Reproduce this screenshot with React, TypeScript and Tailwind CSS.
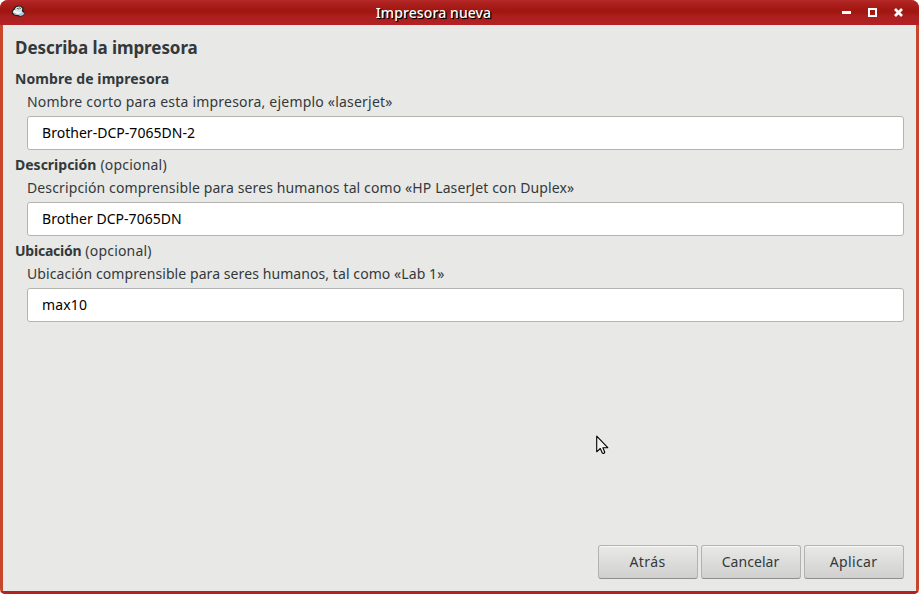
import React from "react";

function Field({
  label,
  optional,
  labelClass,
  hint,
  hintClass,
  value,
  valueClass,
}: {
  label: string;
  optional?: boolean;
  labelClass: string;
  hint: string;
  hintClass: string;
  value: string;
  valueClass: string;
}) {
  return (
    <div className="pb-[2px]">
      <div className="flex h-6 items-center gap-1 whitespace-nowrap">
        <span className={`font-bold ${labelClass}`}>{label}</span>
        {optional && <span className="tracking-[0.2px]">(opcional)</span>}
      </div>
      <div className={`mt-px pl-3 leading-[22px] whitespace-nowrap ${hintClass}`}>{hint}</div>
      <div
        className={`mt-[3px] ml-3 flex h-[34px] items-center rounded-[3px] border border-[#b4b4b1] bg-white px-[14px] pb-0.5 text-black ${valueClass}`}
      >
        {value}
      </div>
    </div>
  );
}

function DialogButton({ label, className }: { label: string; className: string }) {
  return (
    <button
      className={`h-[34px] w-[100px] rounded-[3px] border border-[#b2b2af] border-b-[#8f8f8c] bg-linear-to-b from-[#e9e9e7] to-[#d0d0ce] pr-px leading-8 shadow-[inset_0_1px_0_#f8f8f7] ${className}`}
    >
      {label}
    </button>
  );
}

function PrinterIcon() {
  return (
    <svg width="16" height="14" viewBox="0 0 16 14" className="relative -top-px block">
      <path d="M2.6 3.6 4.6 1l5.2-.5 2.6 2.1v3l2 2-1.8 3.2-3.6 1L3 10.6 1 8.8l.2-3.3z" fill="#1c2422" />
      <path d="M3.8 4 5.4 2l3.8-.4 2 1.6-.4 3.3-5.2.6z" fill="#dde3e1" />
      <path d="M2.1 6 3.8 4.6l2.2 2 5-.4 1 1.5-3.6 2.2-5-.5-1.2-1.6z" fill="#f6f9f9" />
      <path d="m6.5 9.4 4.3-2 2.9.4-1.6 2.4-2.9.8z" fill="#a9c8e2" />
      <path d="m5.8 3.3 2.5.8M8 2.6l2 1" stroke="#48504e" strokeWidth=".9" />
      <path d="m3 8.2 2.5.7" stroke="#8b9694" strokeWidth=".8" />
    </svg>
  );
}

function WindowControls() {
  return (
    <div className="flex items-center gap-[17px]">
      <svg width="9" height="9" viewBox="0 0 9 9" className="block">
        <path d="M0 3h9v3H0z" fill="#fff" />
      </svg>
      <svg width="9" height="9" viewBox="0 0 9 9" className="block">
        <path d="M1 1h7v7H1z" fill="none" stroke="#fff" strokeWidth="2" />
      </svg>
      <svg width="9" height="9" viewBox="0 0 9 9" className="block">
        <path d="m1 1 7 7M8 1 1 8" stroke="#fff" strokeWidth="2.7" />
      </svg>
    </div>
  );
}

export default function App() {
  return (
    <div className="h-[594px] w-[919px] bg-white font-['Noto_Sans','Open_Sans',sans-serif] text-[14px] text-[#33393b]">
      <div className="flex h-full flex-col overflow-hidden rounded-t-[8px] rounded-b-[5px] bg-[#c8462b]">
        <header className="flex h-[25px] shrink-0 items-center bg-[linear-gradient(to_bottom,#b62a28_0px,#ad2220_3px,#a31813_9px,#a01610_12px,#ac1e1e_16px,#b32227_25px)] pr-4 pl-[11px]">
          <PrinterIcon />
          <h1 className="flex-1 pr-[2px] text-center text-[14px] leading-[25px] font-medium tracking-[0.1px] text-white [text-shadow:1px_1px_0_#000,1px_1px_1px_#000]">
            Impresora nueva
          </h1>
          <WindowControls />
        </header>

        <main className="mx-[3px] flex min-h-0 flex-1 flex-col bg-[#e8e8e6] px-3 pt-[11px] pb-3">
          <h2 className="mb-[6px] text-[17px] leading-6 font-bold tracking-[-0.06px]">
            Describa la impresora
          </h2>
          <Field
            label="Nombre de impresora"
            labelClass="tracking-[0.09px]"
            hint="Nombre corto para esta impresora, ejemplo «laserjet»"
            hintClass="tracking-[0.21px]"
            value="Brother-DCP-7065DN-2"
            valueClass="tracking-[0.03px]"
          />
          <Field
            label="Descripción"
            optional
            labelClass="tracking-[0px]"
            hint="Descripción comprensible para seres humanos tal como «HP LaserJet con Duplex»"
            hintClass="tracking-[0.12px]"
            value="Brother DCP-7065DN"
            valueClass="tracking-[0.04px]"
          />
          <Field
            label="Ubicación"
            optional
            labelClass="tracking-[-0.24px]"
            hint="Ubicación comprensible para seres humanos, tal como «Lab 1»"
            hintClass="tracking-[0.08px]"
            value="max10"
            valueClass="tracking-[0.15px]"
          />
          <div className="mt-auto flex justify-end gap-[3px]">
            <DialogButton label="Atrás" className="tracking-[0.4px]" />
            <DialogButton label="Cancelar" className="tracking-[0.05px]" />
            <DialogButton label="Aplicar" className="tracking-[0.35px]" />
          </div>
        </main>
        <div className="h-[3px] shrink-0 bg-[#b22222]" />
      </div>

      <svg width="13" height="20" viewBox="0 0 13 20" className="absolute top-[435px] left-[596px]">
        <path
          d="M.7 1.2v15.6l3.6-3.3 2 4.5c.8.9 2.6.2 2.4-1L6.9 12.7h4.9z"
          fill="#f2f2f0"
          stroke="#000"
          strokeWidth="1.1"
          strokeLinejoin="round"
        />
      </svg>
    </div>
  );
}
